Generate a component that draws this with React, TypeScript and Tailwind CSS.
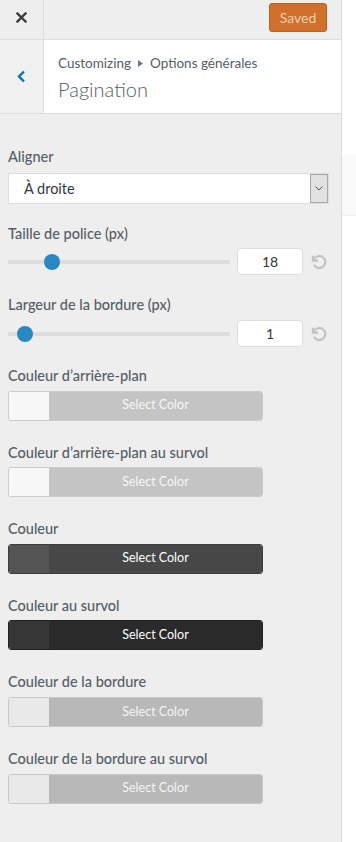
import React from "react";

const font = { fontFamily: 'Lato, "Open Sans", Arial, sans-serif' };

function Label({ children, className = "" }: { children: React.ReactNode; className?: string }) {
  return (
    <div className={`text-[14.5px] leading-[24px] font-medium text-[#555d66] ${className}`}>{children}</div>
  );
}

function Slider({ pos, value }: { pos: number; value: string }) {
  return (
    <div className="flex items-center h-[27px]">
      <div className="relative w-[222px] h-[4px] bg-[#dddddd]">
        <div
          className="absolute top-[-6px] w-[16px] h-[16px] rounded-full bg-[#2b87c1]"
          style={{ left: pos }}
        />
      </div>
      <div className="ml-[7px] w-[66px] h-[27px] bg-white border border-[#dddddd] rounded-[4px] flex items-center justify-center text-[14px] text-[#32373c]">
        {value}
      </div>
      <div className="ml-[7px] w-[18px] h-[18px] flex items-center justify-center">
        <svg width="18" height="18" viewBox="0 0 24 24" fill="none" stroke="#c3c3c3" strokeWidth="3" strokeLinecap="butt">
          <path d="M5 9A8 8 0 1 1 5.2 15.5" />
          <path d="M4 3.5v6.5h6.5" fill="none" />
        </svg>
      </div>
    </div>
  );
}

function ColorBtn({ swatch, main, border, text }: { swatch: string; main: string; border: string; text: string }) {
  return (
    <div
      className="flex w-[255px] h-[30px] rounded-[3px] border overflow-hidden"
      style={{ borderColor: border }}
    >
      <div className="w-[40px] h-full" style={{ background: swatch }} />
      <div
        className="flex-1 h-full flex items-center justify-center text-[12.5px]"
        style={{ background: main, color: text }}
      >
        Select Color
      </div>
    </div>
  );
}

export default function App() {
  const colors = [
    { label: "Couleur d’arrière-plan", swatch: "#f7f7f7", main: "#c4c4c4", border: "#cccccc", text: "#f7f7f7" },
    { label: "Couleur d’arrière-plan au survol", swatch: "#f7f7f7", main: "#c4c4c4", border: "#cccccc", text: "#f7f7f7" },
    { label: "Couleur", swatch: "#545454", main: "#474747", border: "#3d3d3d", text: "#ffffff" },
    { label: "Couleur au survol", swatch: "#363636", main: "#2a2a2a", border: "#222222", text: "#ffffff" },
    { label: "Couleur de la bordure", swatch: "#e9e9e9", main: "#b8b8b8", border: "#c8c8c8", text: "#f5f5f5" },
    { label: "Couleur de la bordure au survol", swatch: "#e9e9e9", main: "#b8b8b8", border: "#c8c8c8", text: "#f5f5f5" },
  ];
  return (
    <div className="flex w-[356px] h-[842px] overflow-hidden" style={font}>
      <div className="w-[342px] h-full bg-[#eeeeee] border-r border-[#dddddd] flex flex-col shrink-0">
        {/* top bar */}
        <div className="flex h-[40px] border-b border-[#dddddd] shrink-0">
          <div className="w-[44px] h-full border-r border-[#dddddd] flex items-center justify-center pb-[4px]">
            <svg width="11" height="11" viewBox="0 0 11 11" stroke="#3c3c3c" strokeWidth="2.4" strokeLinecap="square">
              <path d="M1.5 1.5l8 8M9.5 1.5l-8 8" />
            </svg>
          </div>
          <div className="flex-1" />
          <div className="mt-[3px] mr-[14px] w-[58px] h-[29px] rounded-[3px] bg-[#d0702a] border border-[#b9601f] flex items-center justify-center text-[14px] text-[#f1cdb2]">
            Saved
          </div>
        </div>
        {/* header */}
        <div className="flex h-[74px] border-b border-[#dddddd] shrink-0">
          <div className="w-[44px] h-full border-r border-[#dddddd] bg-[#f0f0f1] flex items-center justify-center">
            <svg width="9" height="13" viewBox="0 0 9 13" fill="none" stroke="#0073aa" strokeWidth="2.4">
              <path d="M7 1.5L2 6.5l5 5" />
            </svg>
          </div>
          <div className="flex-1 bg-white pl-[14px] pt-[13px]">
            <div className="flex items-center text-[13.5px] leading-[20px] text-[#555d66]">
              <span>Customizing</span>
              <svg className="mx-[7px]" width="5" height="7" viewBox="0 0 5 7">
                <path d="M0 0l5 3.5L0 7z" fill="#72777c" />
              </svg>
              <span>Options générales</span>
            </div>
            <div className="mt-[2px] text-[20px] leading-[28px] font-light text-[#555d66]">Pagination</div>
          </div>
        </div>
        {/* content */}
        <div className="pl-[8px] pr-[12px]">
          <Label className="mt-[31px]">Aligner</Label>
          <div className="mt-[4px] h-[31px] bg-white border border-[#dddddd] flex">
            <div className="flex-1 flex items-center pl-[15px] text-[14.5px] text-[#32373c]">À droite</div>
            <div className="w-[18px] h-full bg-[#e1e1e1] border border-[#a8a8a8] flex items-center justify-center">
              <svg width="8" height="5" viewBox="0 0 8 5" fill="none" stroke="#555" strokeWidth="1">
                <path d="M0.5 0.5L4 4l3.5-3.5" />
              </svg>
            </div>
          </div>
          <Label className="mt-[18px]">Taille de police (px)</Label>
          <div className="mt-[2px]">
            <Slider pos={36} value="18" />
          </div>
          <Label className="mt-[18px]">Largeur de la bordure (px)</Label>
          <div className="mt-[3px]">
            <Slider pos={9} value="1" />
          </div>
          {colors.map((c, i) => (
            <div key={i} className={i === 0 ? "mt-[17px]" : "mt-[20px]"}>
              <div className="text-[14.5px] leading-[24.6px] font-medium text-[#555d66]">{c.label}</div>
              <div className="mt-[2px]">
                <ColorBtn swatch={c.swatch} main={c.main} border={c.border} text={c.text} />
              </div>
            </div>
          ))}
        </div>
      </div>
      <div className="flex-1 bg-white">
        <div className="mt-[155px] h-[61px] bg-[#f9f9f9] border-b border-[#eeeeee]" />
      </div>
    </div>
  );
}
